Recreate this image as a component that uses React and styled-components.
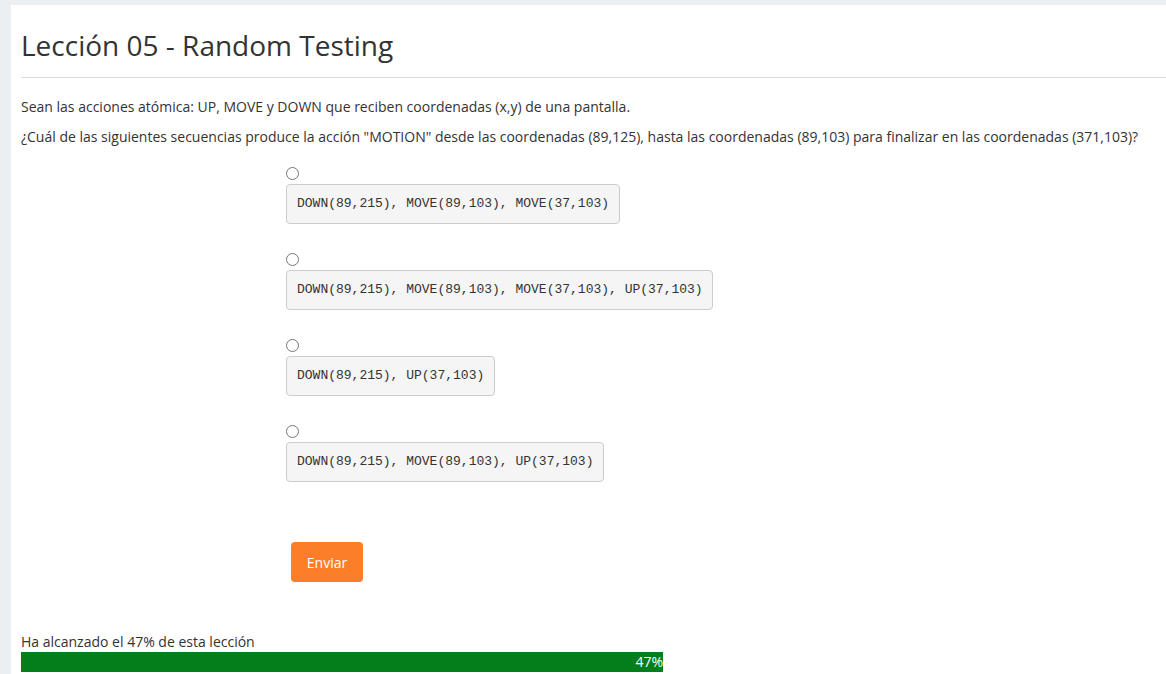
import React from 'react'
import styled, { createGlobalStyle } from 'styled-components'

const GlobalStyle = createGlobalStyle`
  html, body {
    margin: 0;
    padding: 0;
    overflow: hidden;
    background: #eceff1;
  }
  body {
    font-family: "Open Sans", "Liberation Sans", sans-serif;
    font-size: 14px;
    line-height: 20px;
    color: #333;
  }
`

const Page = styled.div`
  padding: 5px 0 0 11px;
  height: 674px;
  box-sizing: border-box;
  overflow: hidden;
`

const Panel = styled.div`
  background: #fff;
  padding: 25px 0 40px 10px;
  min-height: 700px;
`

const Header = styled.div`
  border-bottom: 1px solid #ddd;
  padding-bottom: 16px;
  margin-bottom: 19px;
`

const Title = styled.h1`
  margin: 0;
  font-size: 28px;
  line-height: 31px;
  font-weight: 400;
  color: #333;
`

const Text = styled.p`
  margin: 0 0 10px;
  white-space: nowrap;
`

const Options = styled.div`
  margin: 20px 0 0 265px;
  display: flex;
  flex-direction: column;
  align-items: flex-start;
  gap: 29px;
`

const Option = styled.label`
  display: flex;
  flex-direction: column;
  align-items: flex-start;
  gap: 4px;
  cursor: pointer;
`

const Radio = styled.input`
  margin: 0;
  width: 13px;
  height: 13px;
`

const Code = styled.pre`
  margin: 0;
  padding: 10px 9.5px 10px 10px;
  font-family: "Liberation Mono", "Courier New", monospace;
  font-size: 13px;
  line-height: 18px;
  color: #333;
  background: #f5f5f5;
  border: 1px solid #ccc;
  border-radius: 4px;
`

const Button = styled.button`
  display: block;
  margin: 60px 0 0 270px;
  width: 72px;
  height: 40px;
  border: none;
  border-radius: 4px;
  background: #fd7e29;
  color: #fff;
  font-family: "Open Sans", "Liberation Sans", sans-serif;
  font-size: 14px;
  cursor: pointer;
`

const Progress = styled.div`
  margin-top: 50px;
  font-stretch: 93%;
`

const Track = styled.div`
  width: 1366px;
  height: 20px;
  background: #fff;
`

const Fill = styled.div`
  height: 100%;
  background: #037e1a;
  color: #fff;
  font-size: 14px;
  line-height: 20px;
  text-align: right;
`

const options = [
  'DOWN(89,215), MOVE(89,103), MOVE(37,103)',
  'DOWN(89,215), MOVE(89,103), MOVE(37,103), UP(37,103)',
  'DOWN(89,215), UP(37,103)',
  'DOWN(89,215), MOVE(89,103), UP(37,103)',
]

const percent = 47

export default function App() {
  return (
    <Page>
      <GlobalStyle />
      <Panel>
        <Header>
          <Title>Lección 05 - Random Testing</Title>
        </Header>
        <Text>Sean las acciones atómica: UP, MOVE y DOWN que reciben coordenadas (x,y) de una pantalla.</Text>
        <Text>¿Cuál de las siguientes secuencias produce la acción "MOTION" desde las coordenadas (89,125), hasta las coordenadas (89,103) para finalizar en las coordenadas (371,103)?</Text>
        <Options>
          {options.map((o, i) => (
            <Option key={i}>
              <Radio type="radio" name="answer" />
              <Code>{o}</Code>
            </Option>
          ))}
        </Options>
        <Button>Enviar</Button>
        <Progress>
          Ha alcanzado el {percent}% de esta lección
          <Track>
            <Fill style={{ width: `${percent}%` }}>{percent}%</Fill>
          </Track>
        </Progress>
      </Panel>
    </Page>
  )
}
